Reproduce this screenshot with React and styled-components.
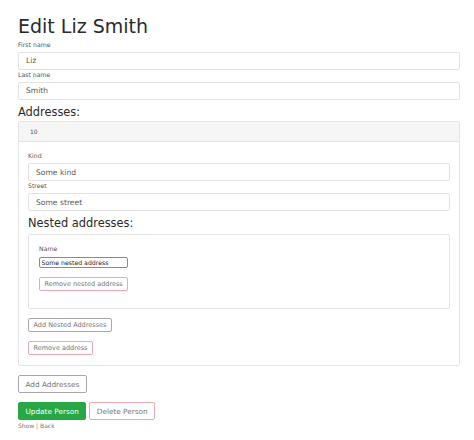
import styled, { createGlobalStyle } from 'styled-components';

const GlobalStyle = createGlobalStyle`
  html, body {
    margin: 0;
    padding: 0;
    background: #fff;
  }
  body {
    font-family: "DejaVu Sans", Verdana, sans-serif;
    color: #212529;
  }
`;

const Page = styled.div`
  padding: 15px 14px 0 18px;
`;

const Title = styled.h1`
  margin: 0 0 2px;
  font-size: 19px;
  font-weight: 400;
  line-height: 1.2;
  color: #2a2a2a;
`;

const Heading = styled.h4`
  margin: ${p => p.$top || 6}px 0 ${p => p.$bottom || 2}px;
  font-size: 11.4px;
  font-weight: 400;
  line-height: 1.2;
  color: #2a2a2a;
`;

const Label = styled.label`
  display: block;
  font-size: 6.2px;
  line-height: 9px;
  margin-bottom: ${p => p.$gap ?? 3}px;
  color: #555;
`;

const Field = styled.div`
  margin-bottom: ${p => p.$bottom ?? 0}px;
`;

const Input = styled.input`
  display: block;
  box-sizing: border-box;
  width: 100%;
  height: 18px;
  padding: 0 7px;
  font-family: inherit;
  font-size: 7.6px;
  color: #5a5a5a;
  background: #fff;
  border: 1px solid #e2e2e2;
  border-radius: 2px;
  outline: none;
`;

const PlainInput = styled.input`
  display: block;
  box-sizing: border-box;
  width: 89px;
  height: 11px;
  padding: 0 1.5px;
  font-family: inherit;
  font-size: 6.2px;
  color: #222;
  background: #fff;
  border: 1px solid #8a8a8a;
  border-radius: 2px;
  outline: none;
`;

const Card = styled.div`
  border: 1px solid #e4e4e4;
  border-radius: 2px;
  background: #fff;
`;

const CardHeader = styled.div`
  height: 20px;
  box-sizing: border-box;
  padding: 0 11px;
  display: flex;
  align-items: center;
  font-size: 6px;
  color: #555;
  background: #f6f6f6;
  border-bottom: 1px solid #e4e4e4;
`;

const CardBody = styled.div`
  padding: ${p => p.$pad || '9px'};
`;

const Button = styled.button`
  display: block;
  box-sizing: border-box;
  height: ${p => (p.$small ? 14 : 18)}px;
  padding: 0 ${p => (p.$small ? 4.5 : 6.5)}px;
  margin-top: ${p => p.$top ?? 0}px;
  font-family: inherit;
  font-size: ${p => (p.$small ? 6.5 : 7.3)}px;
  color: ${p => (p.$variant === 'success' ? '#fff' : '#747474')};
  background: ${p => (p.$variant === 'success' ? '#28a745' : '#fff')};
  border: 1px solid
    ${p =>
      p.$variant === 'success'
        ? '#28a745'
        : p.$variant === 'danger'
        ? '#eba8b0'
        : '#a8a8a8'};
  border-radius: 2px;
  cursor: pointer;
`;

const ButtonRow = styled.div`
  display: flex;
  gap: 3px;
  margin-top: 9px;
`;

const Links = styled.div`
  margin-top: 2px;
  font-size: 6px;
  line-height: 8px;
  color: #777;

  a {
    color: #777;
    text-decoration: none;
  }
`;

const NestedAddress = () => (
  <Card>
    <CardBody $pad="9px 10px 17px">
      <Label $gap={4}>Name</Label>
      <PlainInput defaultValue="Some nested address" />
      <Button $small $variant="danger" $top={9}>
        Remove nested address
      </Button>
    </CardBody>
  </Card>
);

const Address = () => (
  <Card>
    <CardHeader>10</CardHeader>
    <CardBody $pad="9px 9px 10px">
      <Field>
        <Label>Kind</Label>
        <Input defaultValue="Some kind" />
      </Field>
      <Field>
        <Label>Street</Label>
        <Input defaultValue="Some street" />
      </Field>
      <Heading $top={6} $bottom={3}>Nested addresses:</Heading>
      <NestedAddress />
      <Button $small $top={9}>Add Nested Addresses</Button>
      <Button $small $variant="danger" $top={9}>
        Remove address
      </Button>
    </CardBody>
  </Card>
);

export default function App() {
  return (
    <>
      <GlobalStyle />
      <Page>
        <Title>Edit Liz Smith</Title>
        <Field>
          <Label>First name</Label>
          <Input defaultValue="Liz" />
        </Field>
        <Field>
          <Label>Last name</Label>
          <Input defaultValue="Smith" />
        </Field>
        <Heading $top={6} $bottom={2}>Addresses:</Heading>
        <Address />
        <Button $top={9}>Add Addresses</Button>
        <ButtonRow>
          <Button $variant="success">Update Person</Button>
          <Button $variant="danger">Delete Person</Button>
        </ButtonRow>
        <Links>
          <a href="#show">Show</a> | <a href="#back">Back</a>
        </Links>
      </Page>
    </>
  );
}
